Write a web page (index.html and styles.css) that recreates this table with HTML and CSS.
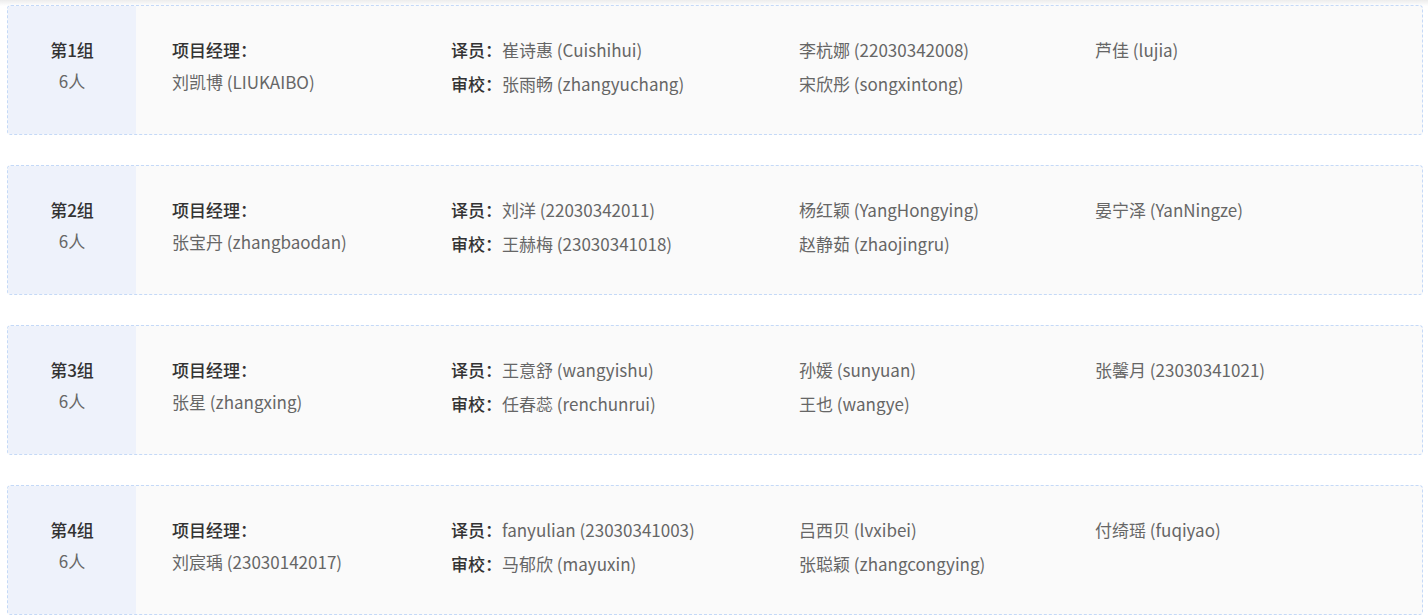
FILE: index.html
```html
<!DOCTYPE html>
<html lang="zh-CN">
<head>
<meta charset="utf-8">
<title>分组</title>
<link rel="stylesheet" href="styles.css">
</head>
<body>
<div class="top-shade"></div>
<div class="groups">
  <div class="group">
    <div class="group-head"><div class="group-name">第1组</div><div class="group-count">6人</div></div>
    <div class="group-body">
      <div class="col col-pm"><div class="label">项目经理：</div><div class="name">刘凯博 (LIUKAIBO)</div></div>
      <div class="col col-main"><div class="row"><span class="label">译员：</span><span class="name">崔诗惠 (Cuishihui)</span></div><div class="row"><span class="label">审校：</span><span class="name">张雨畅 (zhangyuchang)</span></div></div>
      <div class="col col-b"><div class="row name">李杭娜 (22030342008)</div><div class="row name">宋欣彤 (songxintong)</div></div>
      <div class="col col-c"><div class="row name">芦佳 (lujia)</div></div>
    </div>
  </div>
  <div class="group">
    <div class="group-head"><div class="group-name">第2组</div><div class="group-count">6人</div></div>
    <div class="group-body">
      <div class="col col-pm"><div class="label">项目经理：</div><div class="name">张宝丹 (zhangbaodan)</div></div>
      <div class="col col-main"><div class="row"><span class="label">译员：</span><span class="name">刘洋 (22030342011)</span></div><div class="row"><span class="label">审校：</span><span class="name">王赫梅 (23030341018)</span></div></div>
      <div class="col col-b"><div class="row name">杨红颖 (YangHongying)</div><div class="row name">赵静茹 (zhaojingru)</div></div>
      <div class="col col-c"><div class="row name">晏宁泽 (YanNingze)</div></div>
    </div>
  </div>
  <div class="group">
    <div class="group-head"><div class="group-name">第3组</div><div class="group-count">6人</div></div>
    <div class="group-body">
      <div class="col col-pm"><div class="label">项目经理：</div><div class="name">张星 (zhangxing)</div></div>
      <div class="col col-main"><div class="row"><span class="label">译员：</span><span class="name">王意舒 (wangyishu)</span></div><div class="row"><span class="label">审校：</span><span class="name">任春蕊 (renchunrui)</span></div></div>
      <div class="col col-b"><div class="row name">孙媛 (sunyuan)</div><div class="row name">王也 (wangye)</div></div>
      <div class="col col-c"><div class="row name">张馨月 (23030341021)</div></div>
    </div>
  </div>
  <div class="group">
    <div class="group-head"><div class="group-name">第4组</div><div class="group-count">6人</div></div>
    <div class="group-body">
      <div class="col col-pm"><div class="label">项目经理：</div><div class="name">刘宸瑀 (23030142017)</div></div>
      <div class="col col-main"><div class="row"><span class="label">译员：</span><span class="name">fanyulian (23030341003)</span></div><div class="row"><span class="label">审校：</span><span class="name">马郁欣 (mayuxin)</span></div></div>
      <div class="col col-b"><div class="row name">吕西贝 (lvxibei)</div><div class="row name">张聪颖 (zhangcongying)</div></div>
      <div class="col col-c"><div class="row name">付绮瑶 (fuqiyao)</div></div>
    </div>
  </div>
</div>
</body>
</html>
```
FILE: styles.css
```css
html, body {
  margin: 0;
  padding: 0;
  background: #ffffff;
}
body {
  font-family: "Noto Sans CJK SC", "Noto Sans", sans-serif;
  font-size: 17px;
  color: #666666;
  position: relative;
}
.top-shade {
  position: absolute;
  left: 0;
  right: 0;
  top: 0;
  height: 6px;
  background: linear-gradient(to bottom, #ececec, rgba(255,255,255,0));
}
.groups {
  display: flex;
  flex-direction: column;
  gap: 30px;
  padding: 5px 5px 0 7px;
  position: relative;
}
.group {
  display: flex;
  height: 130px;
  box-sizing: border-box;
  border: 1px dashed #c4d9f8;
  border-radius: 4px;
  background: #fafafa;
  overflow: hidden;
}
.group-head {
  width: 128px;
  flex: none;
  background: #eef2fb;
  display: flex;
  flex-direction: column;
  align-items: center;
  padding-top: 32px;
  gap: 7px;
  box-sizing: border-box;
}
.group-name {
  font-weight: 500;
  color: #333333;
  line-height: 24px;
}
.group-count {
  line-height: 24px;
  color: #666666;
}
.group-body {
  flex: 1;
  display: grid;
  grid-template-columns: 279px 348px 296px 1fr;
  padding-left: 36px;
  padding-top: 32px;
}
.col {
  display: flex;
  flex-direction: column;
  gap: 10px;
}
.col-pm {
  gap: 8px;
}
.row, .label, .name {
  line-height: 24px;
}
.label {
  font-weight: 500;
  color: #333333;
}
.name {
  color: #666666;
}
```
